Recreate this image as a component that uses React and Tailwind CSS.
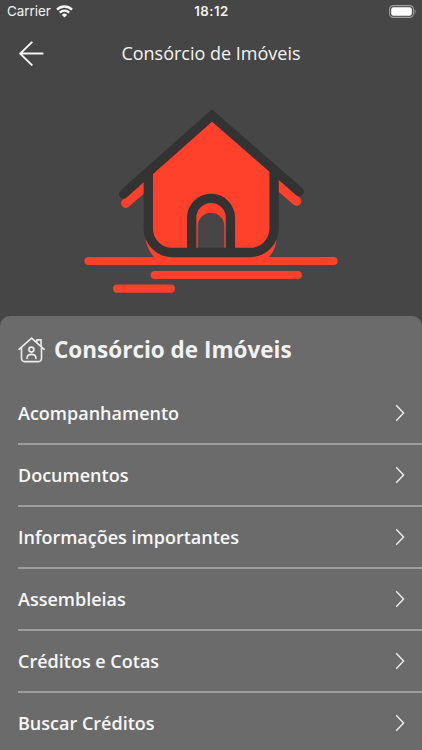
const items = [
  'Acompanhamento',
  'Documentos',
  'Informações importantes',
  'Assembleias',
  'Créditos e Cotas',
  'Buscar Créditos',
];

function StatusBar() {
  return (
    <div className="flex h-[22px] items-center justify-between pl-[7px] pr-[6px] font-['Inter',sans-serif] text-[#f4f4f4]">
      <div className="flex flex-1 items-center gap-[5px]">
        <span className="text-[13.4px] leading-[22px]">Carrier</span>
        <svg width="17" height="13" viewBox="0 0 17 13" fill="none" stroke="currentColor" strokeWidth="2.3">
          <path d="M1 4.6a10.6 10.6 0 0 1 15 0" />
          <path d="M3.8 7.6a6.7 6.7 0 0 1 9.4 0" />
          <path d="M8.5 12.5 5.9 9.9a3.7 3.7 0 0 1 5.2 0z" fill="currentColor" stroke="none" />
        </svg>
      </div>
      <span className="text-[13.2px] font-semibold leading-[22px] tracking-[0.5px]">18:12</span>
      <div className="flex flex-1 justify-end">
        <svg width="27" height="13" viewBox="0 0 27 13" fill="none">
          <rect x="0.6" y="0.6" width="23.8" height="11.8" rx="3.6" stroke="#a0a0a0" strokeWidth="1.1" />
          <rect x="2.2" y="2.2" width="20.6" height="8.6" rx="2.2" fill="#fff" />
          <path d="M25.6 4.4c1.4.6 1.4 3.6 0 4.2z" fill="#a0a0a0" />
        </svg>
      </div>
    </div>
  );
}

function Header() {
  return (
    <header className="grid h-[62px] grid-cols-[62px_1fr_62px] items-center text-[#f4f4f4]">
      <button className="pl-[19px]" aria-label="Voltar">
        <svg width="25" height="25" viewBox="0 0 25 25" fill="none" stroke="currentColor" strokeWidth="2" strokeLinecap="round" strokeLinejoin="round">
          <path d="M12.7 1.4 1.2 12.6l11.5 11.3M1.2 12.6h22.4" />
        </svg>
      </button>
      <h1 className="whitespace-nowrap text-center text-[18px] leading-6">Consórcio de Imóveis</h1>
    </header>
  );
}

function HouseIllustration() {
  return (
    <svg className="block shrink-0" width="422" height="232" viewBox="0 84 422 232" fill="none">
      {/* Sombra vermelha */}
      <g stroke="#ff402a" strokeWidth="8.2" strokeLinecap="round">
        <path d="M88.6 261h245M154.8 275h143M117.2 288.7h53.6" />
        <path d="M125.7 203.3 150 182M296.7 201.3 272 180" strokeWidth="9.2" />
      </g>
      <path d="M212 117 148 173v60l-2.3 7c1.3 7 4.3 13 9.3 18h113c4.500-4 7.300-10 8.300-17l-2.300-8v-60z" fill="#ff402a" />
      <path d="M197.8 250v-24a13.25 13.25 0 0 1 26.5 0v24z" fill="#464646" />
      {/* Contorno */}
      <g stroke="#333" strokeWidth="9.3">
        <path d="M123.5 194 212 115.4 299.3 191.8" strokeLinecap="round" />
        <path d="M148.3 171v57.5a24 24 0 0 0 24 24h77.8a24 24 0 0 0 24-24V170" />
        <path d="M191.7 252v-34.3a19.35 19.35 0 0 1 38.7 0V252" />
      </g>
    </svg>
  );
}

function HomeUserIcon() {
  return (
    <svg width="28" height="26" viewBox="0 0 28 26" fill="none" stroke="#ededed" strokeWidth="1.6" strokeLinecap="round" strokeLinejoin="round">
      <path d="M1 12.3 13.6 1.2 26.2 12.3" />
      <path d="M3.5 11v10.600a3 3 0 0 0 3 3h14a3 3 0 0 0 3-3V11" />
      <path d="M18.8 2.9h4.300v6M18.800 2.900v2" />
      <circle cx="13.4" cy="12.6" r="2.5" />
      <path d="M9 21.400c0-5.400 9-5.400 9 0" />
    </svg>
  );
}

function MenuItem({ label }) {
  return (
    <li className="flex h-[62px] items-center justify-between border-b-2 border-[#9d9d9f] pr-[17px]">
      <span className="text-[18px] font-semibold leading-6 text-[#f8f8f8]">{label}</span>
      <svg width="10" height="18" viewBox="0 0 10 18" fill="none" stroke="#f0f0f0" strokeWidth="1.4">
        <path d="M1.2 1.2 8.6 9l-7.4 7.8" />
      </svg>
    </li>
  );
}

export default function App() {
  return (
    <div className="flex h-[750px] w-[422px] flex-col overflow-hidden bg-[#464646] font-['Open_Sans',sans-serif]">
      <StatusBar />
      <Header />
      <HouseIllustration />
      <main className="min-h-0 flex-1 rounded-t-[10px] bg-[#6b6b6b] pl-[18px]">
        <div className="flex h-[67px] items-center gap-2">
          <HomeUserIcon />
          <h2 className="text-[22.5px] font-bold leading-8 text-[#f2f2f2]">Consórcio de Imóveis</h2>
        </div>
        <ul>
          {items.map((label) => (
            <MenuItem key={label} label={label} />
          ))}
        </ul>
      </main>
    </div>
  );
}
